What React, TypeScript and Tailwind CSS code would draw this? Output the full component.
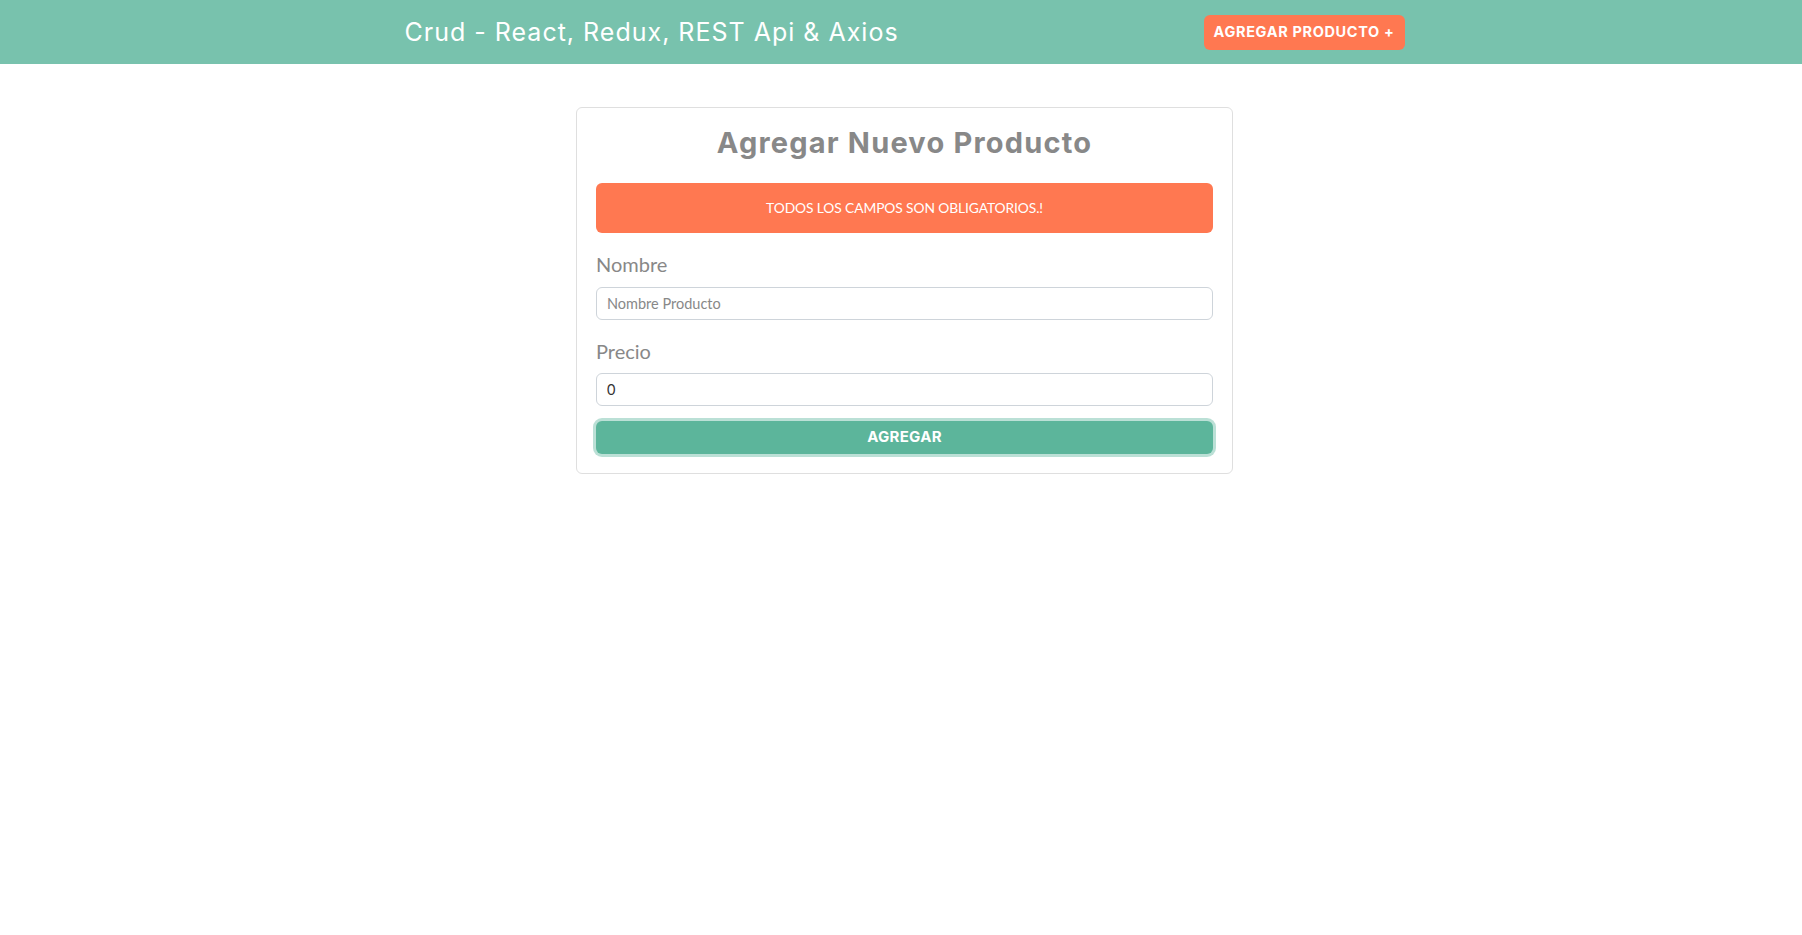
import { FC, useState } from 'react';

const heading = { fontFamily: 'Inter, "Liberation Sans", sans-serif' };
const body = { fontFamily: 'Lato, "Open Sans", "Liberation Sans", sans-serif' };

const Header: FC = () => (
  <nav className="h-[64px] w-full bg-[#78c2ad]">
    <div className="flex h-full w-full justify-center pl-[7px]">
      <div className="flex h-full w-[1000px] items-center justify-between">
        <h1 className="text-[25px] leading-none font-normal tracking-[1px] text-white" style={heading}>
          Crud - React, Redux, REST Api &amp; Axios
        </h1>
        <button
          className="h-[35px] rounded-[6px] bg-[#ff7851] px-[10px] text-[14.5px] font-bold tracking-[0.65px] text-white"
          style={heading}
        >
          AGREGAR PRODUCTO +
        </button>
      </div>
    </div>
  </nav>
);

const NuevoProducto: FC = () => {
  const [nombre, setNombre] = useState('');
  const [precio, setPrecio] = useState('0');

  return (
    <div className="flex w-full justify-center pt-[43px] pl-[7px]">
      <div className="w-[657px] rounded-[6px] border border-[#dfdfdf] bg-white px-[19px] pt-[18px] pb-[19px]">
        <h2
          className="mb-[23px] text-center text-[29px] leading-[34px] font-bold tracking-[1.2px] text-[#888888]"
          style={heading}
        >
          Agregar Nuevo Producto
        </h2>

        <div
          className="mb-[16px] flex h-[50px] items-center justify-center rounded-[6px] bg-[#ff7851] text-[13.8px] tracking-[-0.1px] text-white"
          style={body}
        >
          TODOS LOS CAMPOS SON OBLIGATORIOS.!
        </div>

        <form onSubmit={(e) => e.preventDefault()} style={body}>
          <div className="mb-[16px]">
            <label className="mb-[8px] block text-[20px] leading-[30px] text-[#888888]">Nombre</label>
            <input
              type="text"
              placeholder="Nombre Producto"
              value={nombre}
              onChange={(e) => setNombre(e.target.value)}
              className="block h-[33px] w-full rounded-[6px] border border-[#ced4da] px-[10px] text-[14.5px] text-[#495057] outline-none placeholder:text-[#888888]"
            />
          </div>
          <div className="mb-[15px]">
            <label className="mb-[7px] block text-[20px] leading-[30px] text-[#888888]">Precio</label>
            <input
              type="number"
              placeholder="Precio Producto"
              value={precio}
              onChange={(e) => setPrecio(e.target.value)}
              className="block h-[33px] w-full appearance-none rounded-[6px] border border-[#ced4da] px-[10px] text-[14.5px] text-[#333333] outline-none"
            />
          </div>
          <button
            type="submit"
            className="block h-[33px] w-full rounded-[6px] bg-[#5cb59b] text-[15px] font-bold tracking-[0.3px] text-white shadow-[0_0_0_3px_rgba(120,194,173,0.5)]"
            style={heading}
          >
            AGREGAR
          </button>
        </form>
      </div>
    </div>
  );
};

export default function App() {
  return (
    <div className="min-h-screen w-full bg-white">
      <Header />
      <NuevoProducto />
    </div>
  );
}
